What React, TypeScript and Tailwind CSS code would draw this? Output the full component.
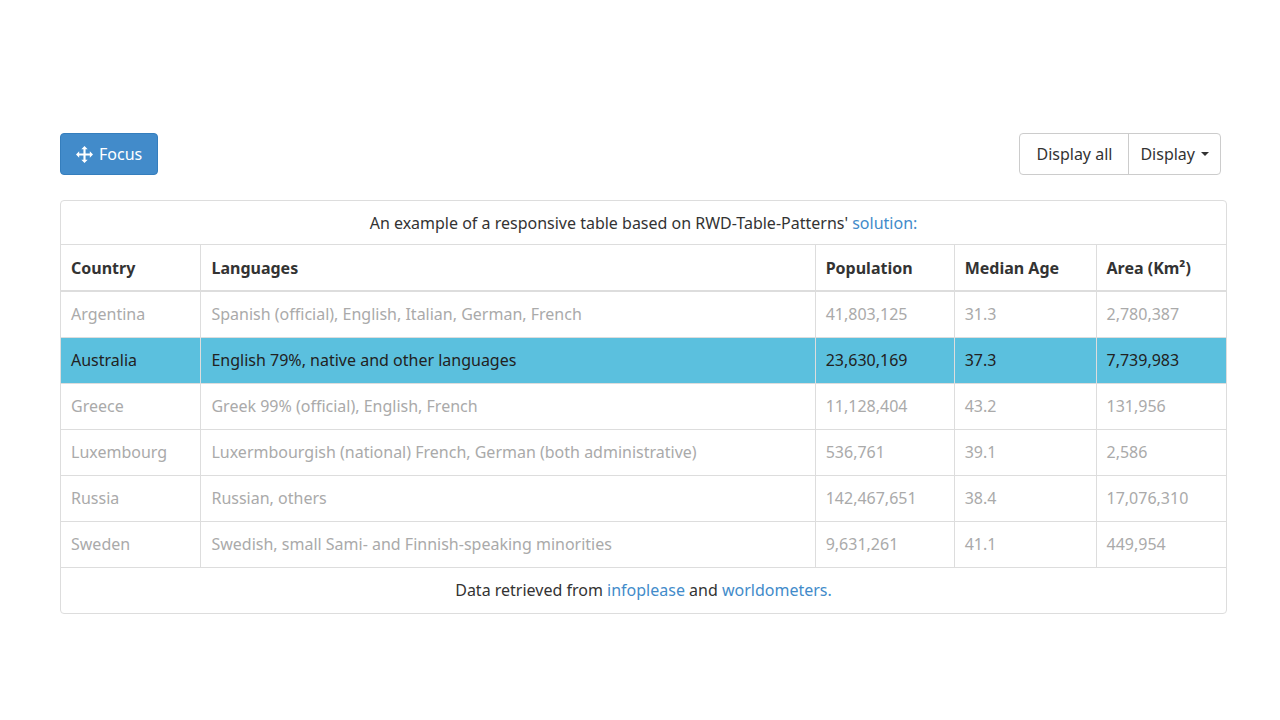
const rows = [
  ["Argentina", "Spanish (official), English, Italian, German, French", "41,803,125", "31.3", "2,780,387"],
  ["Australia", "English 79%, native and other languages", "23,630,169", "37.3", "7,739,983"],
  ["Greece", "Greek 99% (official), English, French", "11,128,404", "43.2", "131,956"],
  ["Luxembourg", "Luxermbourgish (national) French, German (both administrative)", "536,761", "39.1", "2,586"],
  ["Russia", "Russian, others", "142,467,651", "38.4", "17,076,310"],
  ["Sweden", "Swedish, small Sami- and Finnish-speaking minorities", "9,631,261", "41.1", "449,954"],
];

const headers = ["Country", "Languages", "Population", "Median Age", "Area (Km²)"];
const widths = ["w-[140px]", "w-[615px]", "w-[139px]", "w-[142px]", "w-[130px]"];

export default function App() {
  return (
    <div className="w-[1280px] h-[720px] bg-white px-[60px] pt-[133px] text-[16px] text-[#333] font-['Liberation_Sans',Arial,sans-serif]">
      <div className="flex justify-between items-center">
        <button className="h-[42px] px-[15px] bg-[#428bca] border border-[#357ebd] rounded-[4px] text-white flex items-center gap-[6px]">
          <svg width="17" height="17" viewBox="0 0 16 16" fill="white">
            <path d="M8 0l3 3H9v4h4V5l3 3-3 3V9H9v4h2l-3 3-3-3h2V9H3v2L0 8l3-3v2h4V3H5z" />
          </svg>
          Focus
        </button>
        <div className="flex h-[42px] border border-[#ccc] rounded-[4px] mr-[-1px]">
          <div className="px-[16px] flex items-center border-r border-[#ccc]">Display all</div>
          <div className="px-[11px] flex items-center gap-[6px]">
            Display
            <span className="w-0 h-0 border-l-[4px] border-r-[4px] border-t-[4px] border-l-transparent border-r-transparent border-t-[#333]" />
          </div>
        </div>
      </div>
      <div className="mt-[25px] w-[1167px] border border-[#ddd] rounded-[4px]">
        <div className="h-[44px] flex items-center justify-center border-b border-[#ddd]">
          An example of a responsive table based on RWD-Table-Patterns'&nbsp;<span className="text-[#428bca]">solution:</span>
        </div>
        <table className="w-full border-collapse">
          <thead>
            <tr className="h-[46px] border-b-2 border-[#ddd]">
              {headers.map((h, i) => (
                <th key={h} className={`${widths[i]} text-left font-bold px-[10px] ${i < 4 ? "border-r border-[#ddd]" : ""}`}>{h}</th>
              ))}
            </tr>
          </thead>
          <tbody>
            {rows.map((r) => {
              const hl = r[0] === "Australia";
              return (
                <tr key={r[0]} className={`h-[46px] border-b border-[#ddd] ${hl ? "bg-[#5bc0de] text-[#222]" : "text-[#aaa]"}`}>
                  {r.map((c, i) => (
                    <td key={i} className={`px-[10px] ${i < 4 ? "border-r border-[#ddd]" : ""}`}>{c}</td>
                  ))}
                </tr>
              );
            })}
          </tbody>
        </table>
        <div className="h-[45px] flex items-center justify-center">
          Data retrieved from&nbsp;<span className="text-[#428bca]">infoplease</span>&nbsp;and&nbsp;<span className="text-[#428bca]">worldometers.</span>
        </div>
      </div>
    </div>
  );
}
